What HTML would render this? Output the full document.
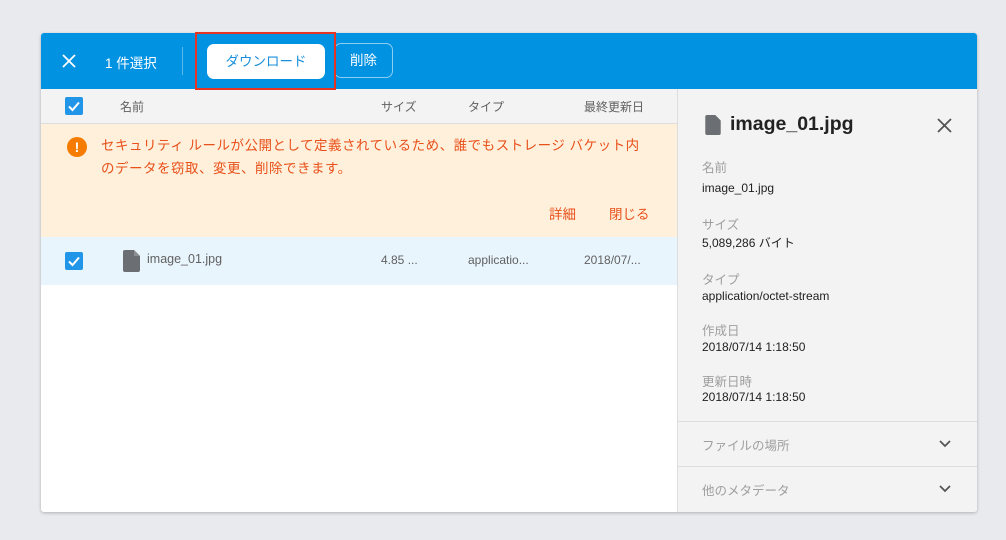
<!DOCTYPE html>
<html><head><meta charset="utf-8"><style>
*{margin:0;padding:0;box-sizing:border-box}
body{width:1006px;height:540px;background:#e8eaed;font-family:"Liberation Sans","Noto Sans CJK JP",sans-serif;position:relative;overflow:hidden}
.a{position:absolute;white-space:nowrap}
.card{position:absolute;left:41px;top:33px;width:936px;height:479px;background:#fff;border-radius:3px;overflow:hidden;box-shadow:0 1px 3px rgba(0,0,0,.25)}
.cb{position:absolute;width:18px;height:18px;background:#2196e8;border-radius:2px}
.lab{font-size:12.5px;color:#9e9e9e}
.val{font-size:12px;color:#212121}
</style></head><body>
<div class="card">
 <div class="a" style="left:0;top:0;width:936px;height:56px;background:#0292e2"></div>
 <svg class="a" style="left:20px;top:20px" width="16" height="16" viewBox="0 0 16 16"><path d="M2 2L14 14M14 2L2 14" stroke="#fff" stroke-width="1.8"/></svg>
 <div class="a" style="left:64px;top:19px;font-size:13.5px;color:#fff">1 件選択</div>
 <div class="a" style="left:141px;top:14px;width:1px;height:28px;background:rgba(255,255,255,.35)"></div>
 <div class="a" style="left:166px;top:11px;width:118px;height:35px;background:#fff;border-radius:7px;color:#1a8fdc;font-size:13.5px;text-align:center;line-height:35px">ダウンロード</div>
 <div class="a" style="left:293px;top:10px;width:59px;height:35px;border:1px solid rgba(255,255,255,.55);border-radius:7px;color:#fff;font-size:13.5px;text-align:center;line-height:33px">削除</div>
 <div class="a" style="left:0;top:56px;width:636px;height:35px;background:#f3f3f3;border-bottom:1px solid #ddd"></div>
 <div class="cb" style="left:24px;top:64px"></div>
 <svg class="a" style="left:24px;top:64px" width="18" height="18"><path d="M4 9.5L7.5 13L14 5.5" stroke="#fff" stroke-width="2" fill="none"/></svg>
 <div class="a" style="left:79px;top:65px;font-size:12px;color:#616161">名前</div>
 <div class="a" style="left:340px;top:65px;font-size:12px;color:#616161">サイズ</div>
 <div class="a" style="left:427px;top:65px;font-size:12px;color:#616161">タイプ</div>
 <div class="a" style="left:543px;top:65px;font-size:12px;color:#616161">最終更新日</div>
 <div class="a" style="left:0;top:91px;width:636px;height:113px;background:#fff0db"></div>
 <div class="a" style="left:26px;top:104px;width:20px;height:20px;border-radius:50%;background:#f57c00;color:#fff;font-weight:bold;font-size:14px;text-align:center;line-height:20px">!</div>
 <div class="a" style="left:60px;top:101px;font-size:13.5px;line-height:23px;color:#e8501a;letter-spacing:0.5px">セキュリティ ルールが公開として定義されているため、誰でもストレージ バケット内<br>のデータを窃取、変更、削除できます。</div>
 <div class="a" style="left:508px;top:170px;font-size:13.5px;color:#e8501a">詳細</div>
 <div class="a" style="left:568px;top:170px;font-size:13.5px;color:#e8501a">閉じる</div>
 <div class="a" style="left:0;top:204px;width:636px;height:48px;background:#e9f5fd"></div>
 <div class="cb" style="left:24px;top:219px"></div>
 <svg class="a" style="left:24px;top:219px" width="18" height="18"><path d="M4 9.5L7.5 13L14 5.5" stroke="#fff" stroke-width="2" fill="none"/></svg>
 <svg class="a" style="left:82px;top:217px" width="17" height="22" viewBox="0 0 17 22"><path d="M2 0H11L17 6V20Q17 22 15 22H2Q0 22 0 20V2Q0 0 2 0Z" fill="#6b6e72"/><path d="M11 0V6H17" fill="#8a8d91"/></svg>
 <div class="a" style="left:106px;top:219px;font-size:12.5px;color:#616161">image_01.jpg</div>
 <div class="a" style="left:340px;top:220px;font-size:12px;color:#616161">4.85 ...</div>
 <div class="a" style="left:427px;top:220px;font-size:12px;color:#616161">applicatio...</div>
 <div class="a" style="left:543px;top:220px;font-size:12px;color:#616161">2018/07/...</div>
 <div class="a" style="left:636px;top:56px;width:300px;height:423px;background:#f3f3f3;border-left:1px solid #ddd"></div>
 <svg class="a" style="left:664px;top:82px" width="16" height="20" viewBox="0 0 17 22"><path d="M2 0H11L17 6V20Q17 22 15 22H2Q0 22 0 20V2Q0 0 2 0Z" fill="#6b6e72"/></svg>
 <div class="a" style="left:689px;top:80px;font-size:19.5px;font-weight:bold;color:#222">image_01.jpg</div>
 <svg class="a" style="left:896px;top:85px" width="15" height="15"><path d="M1 1L14 14M14 1L1 14" stroke="#555" stroke-width="1.8"/></svg>
 <div class="a lab" style="left:661px;top:124px">名前</div>
 <div class="a val" style="left:661px;top:148px">image_01.jpg</div>
 <div class="a lab" style="left:661px;top:181px">サイズ</div>
 <div class="a val" style="left:661px;top:201px">5,089,286 バイト</div>
 <div class="a lab" style="left:661px;top:236px">タイプ</div>
 <div class="a val" style="left:661px;top:256px">application/octet-stream</div>
 <div class="a lab" style="left:661px;top:287px">作成日</div>
 <div class="a val" style="left:661px;top:307px">2018/07/14 1:18:50</div>
 <div class="a lab" style="left:661px;top:338px">更新日時</div>
 <div class="a val" style="left:661px;top:357px">2018/07/14 1:18:50</div>
 <div class="a" style="left:637px;top:388px;width:299px;height:1px;background:#ddd"></div>
 <div class="a lab" style="left:661px;top:402px">ファイルの場所</div>
 <svg class="a" style="left:898px;top:407px" width="12" height="8"><path d="M1 1L6 6L11 1" stroke="#555" stroke-width="1.8" fill="none"/></svg>
 <div class="a" style="left:637px;top:433px;width:299px;height:1px;background:#ddd"></div>
 <div class="a lab" style="left:661px;top:447px">他のメタデータ</div>
 <svg class="a" style="left:898px;top:452px" width="12" height="8"><path d="M1 1L6 6L11 1" stroke="#555" stroke-width="1.8" fill="none"/></svg>
</div>
<div class="a" style="left:195px;top:32px;width:141px;height:58px;border:2px solid #e53424"></div>
</body></html>
